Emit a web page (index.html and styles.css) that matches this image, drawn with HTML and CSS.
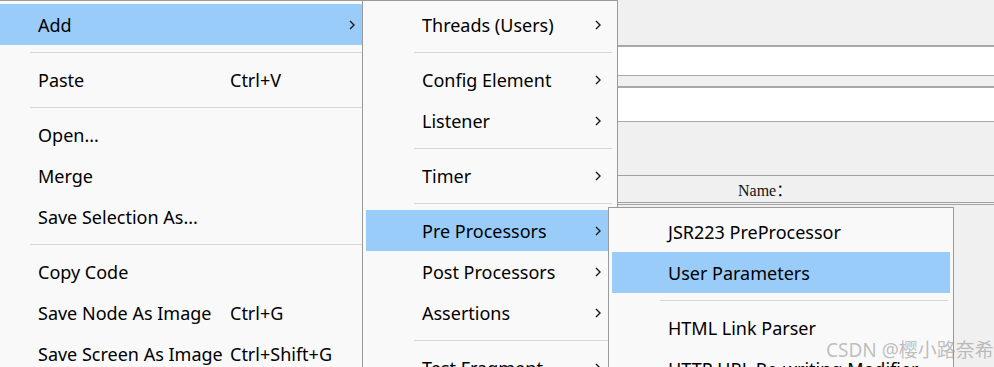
FILE: index.html
```html
<!DOCTYPE html>
<html lang="en">
<head>
    <meta charset="UTF-8">
    <title>JMeter - Add menu</title>
    <link rel="stylesheet" href="styles.css">
</head>
<body>
    <!-- window content behind the popups -->
    <div class="app">
        <div class="band band-top"></div>
        <div class="field field-one"></div>
        <div class="band band-small"></div>
        <div class="field field-two"></div>
        <div class="band band-mid"></div>
        <div class="name-row"><span class="name-label">Name：</span></div>
        <div class="band band-gap"></div>
        <div class="band band-rest"></div>
    </div>

    <!-- context menu -->
    <div class="menu menu-main">
        <div class="item active"><span class="label">Add</span><span class="key"></span><svg class="arrow" viewBox="0 0 6 10"><polyline points="1,1 5,5 1,9"/></svg></div>
        <div class="sep"></div>
        <div class="item"><span class="label">Paste</span><span class="key">Ctrl+V</span></div>
        <div class="sep"></div>
        <div class="item"><span class="label">Open...</span></div>
        <div class="item"><span class="label">Merge</span></div>
        <div class="item"><span class="label">Save Selection As...</span></div>
        <div class="sep"></div>
        <div class="item"><span class="label">Copy Code</span></div>
        <div class="item"><span class="label">Save Node As Image</span><span class="key">Ctrl+G</span></div>
        <div class="item"><span class="label">Save Screen As Image</span><span class="key">Ctrl+Shift+G</span></div>
    </div>

    <!-- Add submenu -->
    <div class="menu menu-add">
        <div class="item"><span class="label">Threads (Users)</span><svg class="arrow" viewBox="0 0 6 10"><polyline points="1,1 5,5 1,9"/></svg></div>
        <div class="sep"></div>
        <div class="item"><span class="label">Config Element</span><svg class="arrow" viewBox="0 0 6 10"><polyline points="1,1 5,5 1,9"/></svg></div>
        <div class="item"><span class="label">Listener</span><svg class="arrow" viewBox="0 0 6 10"><polyline points="1,1 5,5 1,9"/></svg></div>
        <div class="sep"></div>
        <div class="item"><span class="label">Timer</span><svg class="arrow" viewBox="0 0 6 10"><polyline points="1,1 5,5 1,9"/></svg></div>
        <div class="sep"></div>
        <div class="item active"><span class="label">Pre Processors</span><svg class="arrow" viewBox="0 0 6 10"><polyline points="1,1 5,5 1,9"/></svg></div>
        <div class="item"><span class="label">Post Processors</span><svg class="arrow" viewBox="0 0 6 10"><polyline points="1,1 5,5 1,9"/></svg></div>
        <div class="item"><span class="label">Assertions</span><svg class="arrow" viewBox="0 0 6 10"><polyline points="1,1 5,5 1,9"/></svg></div>
        <div class="sep"></div>
        <div class="item"><span class="label">Test Fragment</span><svg class="arrow" viewBox="0 0 6 10"><polyline points="1,1 5,5 1,9"/></svg></div>
    </div>

    <!-- Pre Processors submenu -->
    <div class="menu menu-pre">
        <div class="item"><span class="label">JSR223 PreProcessor</span></div>
        <div class="item active"><span class="label">User Parameters</span></div>
        <div class="sep"></div>
        <div class="item"><span class="label">HTML Link Parser</span></div>
        <div class="item"><span class="label">HTTP URL Re-writing Modifier</span></div>
    </div>

    <div class="watermark">CSDN @樱小路奈希</div>
</body>
</html>
```

FILE: styles.css
```css
body {
    margin: 0;
    padding: 0;
    width: 994px;
    height: 367px;
    overflow: hidden;
    position: relative;
    background: #f0f0f0;
    font-family: 'Noto Sans', 'Noto Sans CJK SC', sans-serif;
    color: #000;
}

/* background window */
.app {
    display: flex;
    flex-direction: column;
}

.band {
    background: #f0f0f0;
}

.band-top { height: 45px; }
.band-small { height: 10px; }
.band-mid { height: 53px; }
.band-gap { height: 1px; }
.band-rest { height: 160px; border-top: 1px solid #a5a5a5; }

.field {
    background: #fff;
}

.field-one {
    height: 28px;
    border-top: 2px solid #a8a8a8;
    border-bottom: 1px solid #a8a8a8;
}

.field-two {
    height: 33px;
    border-top: 2px solid #a8a8a8;
    border-bottom: 1px solid #a8a8a8;
}

.name-row {
    height: 26px;
    border-top: 1px solid #a0a0a0;
    border-bottom: 1px solid #a0a0a0;
    display: flex;
    align-items: center;
    padding-left: 738px;
}

.name-label {
    font-family: 'Liberation Serif', 'Noto Sans CJK SC', serif;
    font-size: 16px;
    color: #111;
}

/* popup menus */
.menu {
    position: absolute;
    box-sizing: border-box;
    background: #f9f9f9;
    border: 1px solid #9a9a9a;
    padding: 3px;
    font-size: 18px;
}

.menu-main {
    left: -22px;
    top: 0;
    width: 394px;
    height: 390px;
}

.menu-add {
    left: 362px;
    top: 0;
    width: 256px;
    height: 400px;
}

.menu-pre {
    left: 608px;
    top: 207px;
    width: 346px;
    height: 200px;
}

.item {
    height: 41px;
    display: flex;
    align-items: center;
    padding-left: 56px;
    white-space: nowrap;
}

.item.active {
    background: #99ccf9;
}

.menu-main .label {
    width: 192px;
}

.arrow {
    width: 6px;
    height: 10px;
    margin-left: auto;
    margin-right: 13px;
}

.arrow polyline {
    fill: none;
    stroke: #1a1a1a;
    stroke-width: 1.4;
}

.sep {
    height: 14px;
    display: flex;
    align-items: center;
    padding-left: 48px;
    padding-right: 2px;
}

.sep::after {
    content: "";
    flex: 1;
    height: 1px;
    background: #d6d6d6;
}

.watermark {
    position: absolute;
    left: 826px;
    top: 335px;
    font-size: 19px;
    color: rgba(140, 140, 140, 0.55);
    white-space: nowrap;
}
```
